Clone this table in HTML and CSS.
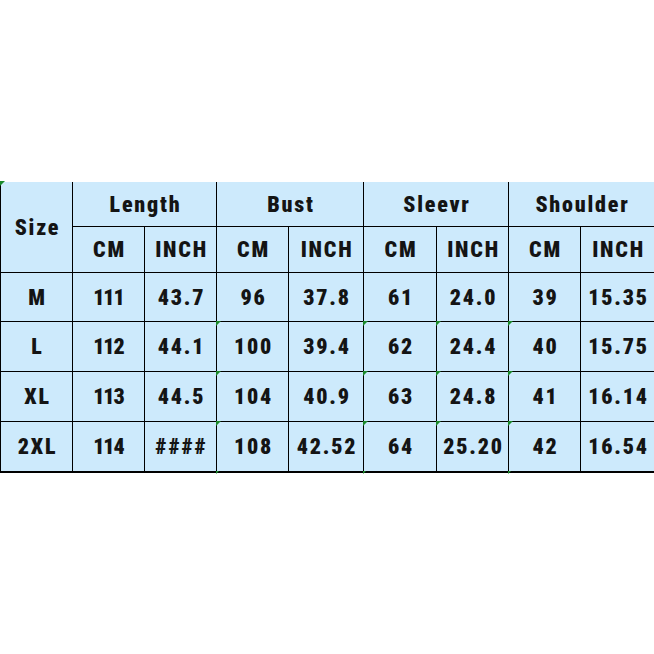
FILE: index.html
```html
<!DOCTYPE html>
<html>
<head>
<meta charset="utf-8">
<link rel="stylesheet" href="styles.css">
</head>
<body>
<div class="chart">
  <div class="cell size flag">Size</div>
  <div class="cell group g1">Length</div>
  <div class="cell group g2">Bust</div>
  <div class="cell group g3">Sleevr</div>
  <div class="cell group g4">Shoulder</div>

  <div class="cell">CM</div><div class="cell">INCH</div>
  <div class="cell">CM</div><div class="cell">INCH</div>
  <div class="cell">CM</div><div class="cell">INCH</div>
  <div class="cell">CM</div><div class="cell">INCH</div>

  <div class="cell">M</div><div class="cell tight">111</div><div class="cell">43.7</div>
  <div class="cell">96</div><div class="cell">37.8</div>
  <div class="cell">61</div><div class="cell">24.0</div>
  <div class="cell">39</div><div class="cell">15.35</div>

  <div class="cell">L</div><div class="cell tight">112</div><div class="cell">44.1</div>
  <div class="cell flag">100</div><div class="cell">39.4</div>
  <div class="cell flag">62</div><div class="cell flag">24.4</div>
  <div class="cell flag">40</div><div class="cell">15.75</div>

  <div class="cell">XL</div><div class="cell tight">113</div><div class="cell">44.5</div>
  <div class="cell flag">104</div><div class="cell">40.9</div>
  <div class="cell flag">63</div><div class="cell flag">24.8</div>
  <div class="cell flag">41</div><div class="cell">16.14</div>

  <div class="cell">2XL</div><div class="cell tight">114</div><div class="cell">####</div>
  <div class="cell flag">108</div><div class="cell">42.52</div>
  <div class="cell flag">64</div><div class="cell flag">25.20</div>
  <div class="cell flag">42</div><div class="cell">16.54</div>
</div>
<div class="below">
  <i class="mark m1"></i><i class="mark m2"></i><i class="mark m3"></i>
</div>
</body>
</html>
```

FILE: styles.css
```css
html, body {
  margin: 0;
  padding: 0;
  background: #ffffff;
  overflow: hidden;
}

.chart {
  margin-top: 182px;
  display: grid;
  grid-template-columns: 71px 71px 71px 71px 74px 72px 71px 71px 73px;
  grid-template-rows: 44px 45px 48px 49px 49px 49px;
  gap: 1px;
  padding: 0 0 2px 1px;
  background: #000000;
  width: 654px;
  box-sizing: border-box;
}

.cell {
  position: relative;
  background: #cdeafc;
  color: #141414;
  font-family: Roboto, "DejaVu Sans Condensed", sans-serif;
  font-stretch: condensed;
  font-weight: 900;
  font-size: 22px;
  letter-spacing: 1.8px;
  display: flex;
  align-items: center;
  justify-content: center;
  padding-left: 2px;
}

.tight {
  letter-spacing: -1px;
  padding-left: 0;
}

.size { grid-row: 1 / 3; grid-column: 1; }
.g1 { grid-column: 2 / 4; }
.g2 { grid-column: 4 / 6; }
.g3 { grid-column: 6 / 8; }
.g4 { grid-column: 8 / 10; }

.flag::before {
  content: "";
  position: absolute;
  left: -1px;
  top: -1px;
  border-top: 5px solid #1b8a2b;
  border-right: 5px solid transparent;
}

.below {
  position: relative;
  height: 4px;
}

.mark {
  position: absolute;
  top: -2px;
  border-top: 3px solid #1b8a2b;
  border-right: 3px solid transparent;
}
.m1 { left: 216px; }
.m2 { left: 363px; }
.m3 { left: 508px; }
```
